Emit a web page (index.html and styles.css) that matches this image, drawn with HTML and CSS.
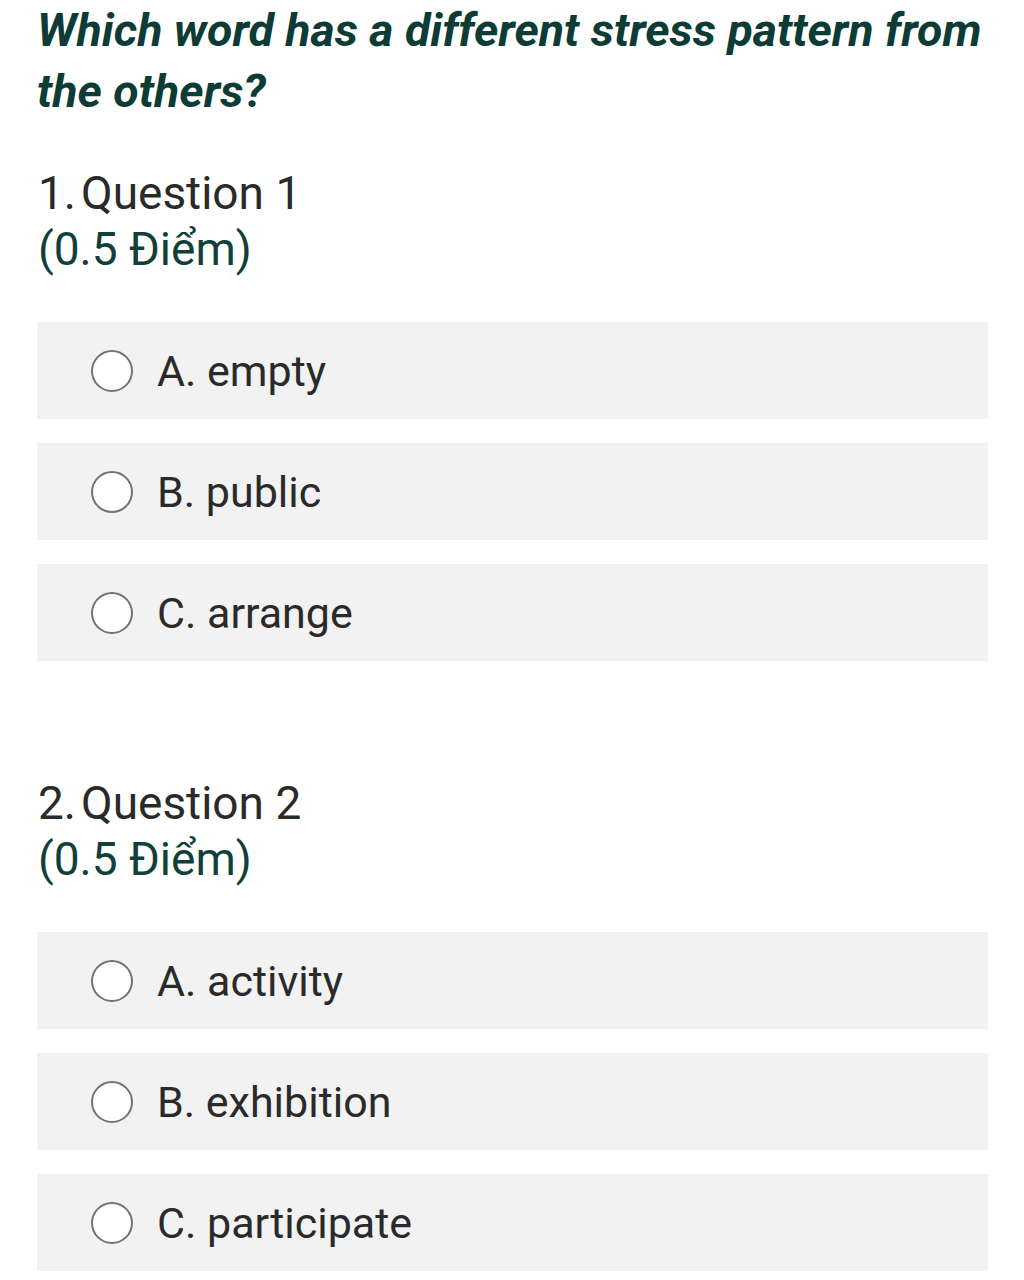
FILE: index.html
```html
<!DOCTYPE html>
<html>
<head>
<meta charset="utf-8">
<link rel="stylesheet" href="styles.css">
</head>
<body>
<div class="page">
  <h1 class="title">Which word has a different stress pattern from the others?</h1>

  <section class="question">
    <div class="qhead">
      <div class="qname"><span class="num">1.</span>Question 1</div>
      <div class="points">(0.5 Điểm)</div>
    </div>
    <div class="options">
      <div class="option"><span class="radio"></span><span class="label">A. empty</span></div>
      <div class="option"><span class="radio"></span><span class="label">B. public</span></div>
      <div class="option"><span class="radio"></span><span class="label">C. arrange</span></div>
    </div>
  </section>

  <section class="question q2">
    <div class="qhead">
      <div class="qname"><span class="num">2.</span>Question 2</div>
      <div class="points">(0.5 Điểm)</div>
    </div>
    <div class="options">
      <div class="option"><span class="radio"></span><span class="label">A. activity</span></div>
      <div class="option"><span class="radio"></span><span class="label">B. exhibition</span></div>
      <div class="option"><span class="radio"></span><span class="label">C. participate</span></div>
    </div>
  </section>
</div>
</body>
</html>
```

FILE: styles.css
```css
html, body {
  margin: 0;
  padding: 0;
  background: #ffffff;
}
body {
  font-family: Roboto, "Noto Sans", "Liberation Sans", sans-serif;
}
.page {
  padding: 0 36px 0 37px;
}
.title {
  margin: 0;
  padding-top: 0;
  font-size: 46.5px;
  line-height: 61px;
  font-weight: 700;
  font-style: italic;
  color: #0d3b35;
  letter-spacing: 0;
}
.question {
  margin-top: 43px;
}
.q2 {
  margin-top: 114px;
}
.qhead {
  padding-left: 1px;
  color: #2a2a2a;
  font-size: 46px;
  line-height: 56px;
}
.num {
  margin-right: 5px;
}
.points {
  color: #11403a;
}
.options {
  margin-top: 45px;
  display: flex;
  flex-direction: column;
  gap: 24px;
}
.q2 .options {
  margin-top: 45px;
}
.option {
  background: #f2f2f2;
  height: 97px;
  display: flex;
  align-items: center;
  padding-left: 54px;
}
.radio {
  width: 38px;
  height: 38px;
  border: 2.5px solid #737373;
  border-radius: 50%;
  background: #ffffff;
  box-sizing: content-box;
  flex: none;
}
.label {
  margin-left: 24px;
  font-size: 43px;
  color: #2a2a2a;
}
```
